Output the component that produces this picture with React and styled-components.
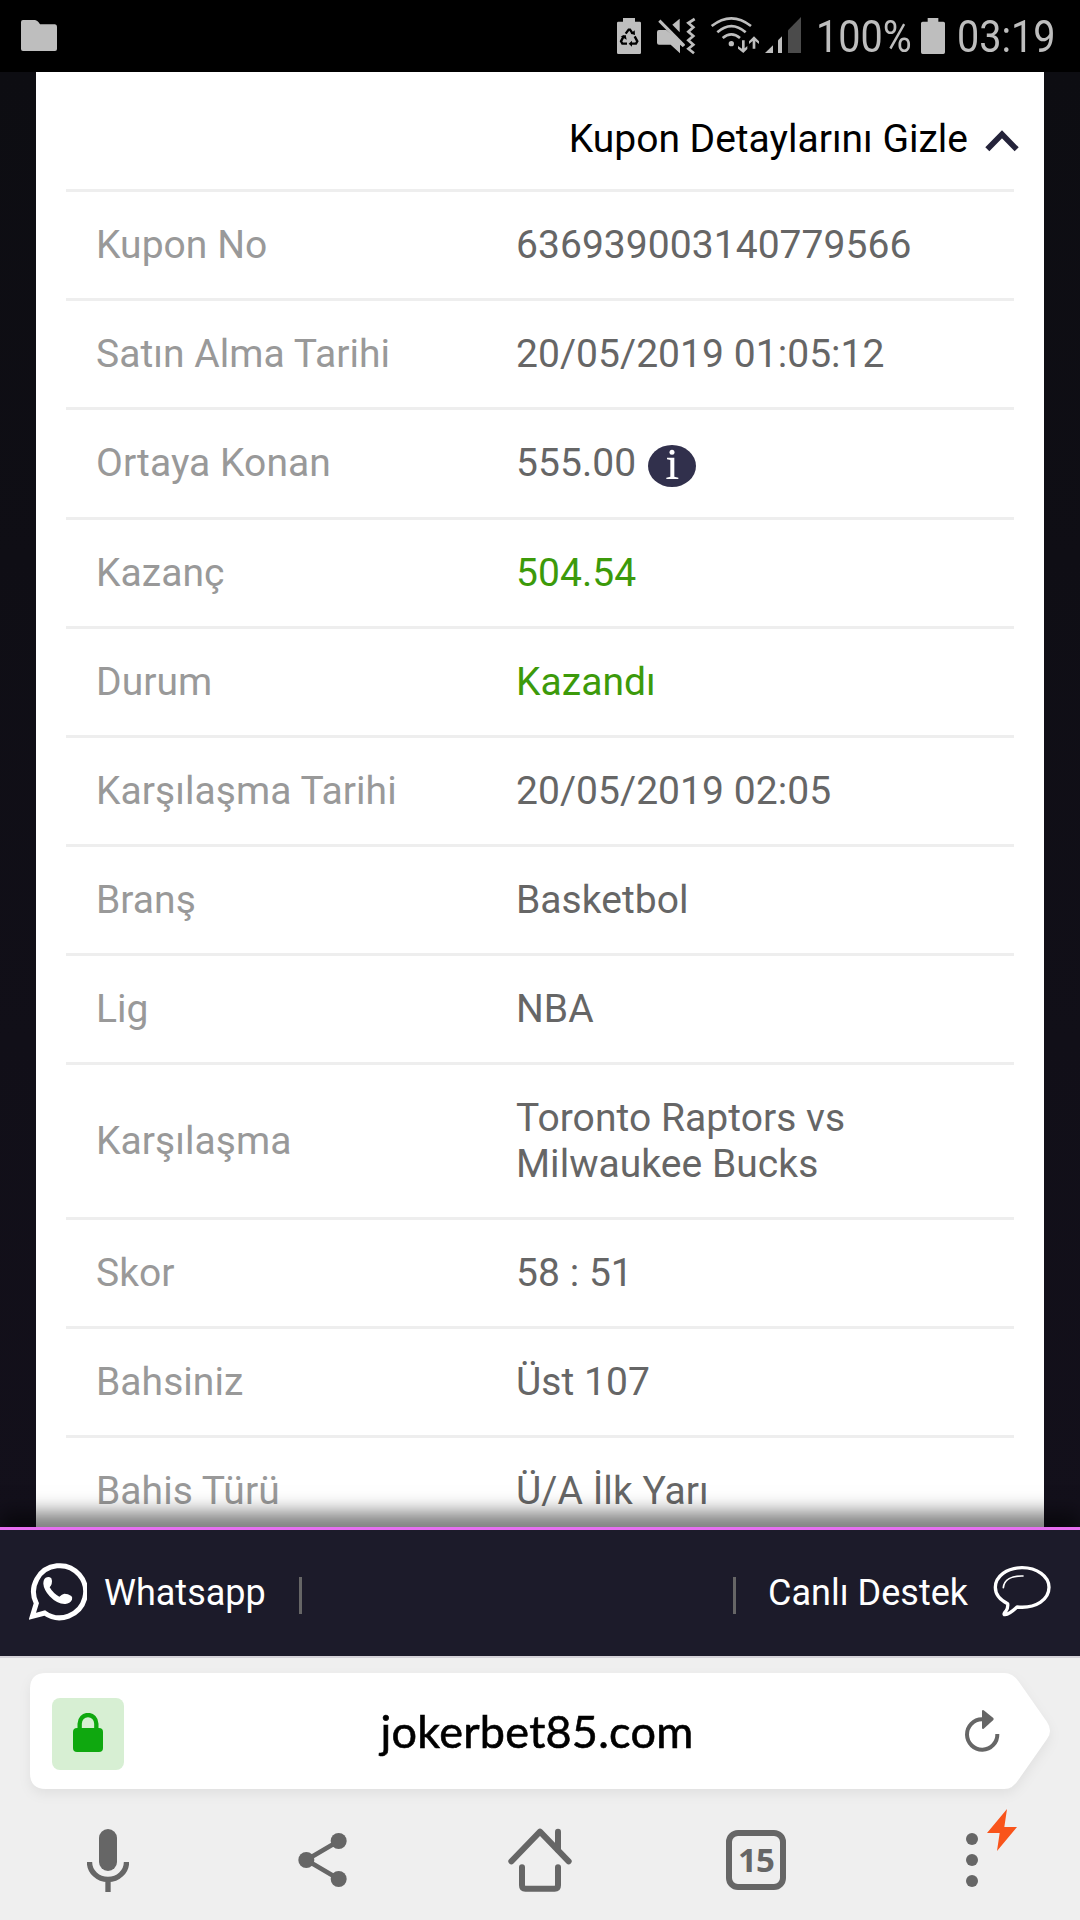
import React from 'react'
import styled, { createGlobalStyle } from 'styled-components';

const rows = [
  { label: 'Kupon No', value: '636939003140779566' },
  { label: 'Satın Alma Tarihi', value: '20/05/2019 01:05:12' },
  { label: 'Ortaya Konan', value: '555.00', info: true },
  { label: 'Kazanç', value: '504.54', won: true },
  { label: 'Durum', value: 'Kazandı', won: true },
  { label: 'Karşılaşma Tarihi', value: '20/05/2019 02:05' },
  { label: 'Branş', value: 'Basketbol' },
  { label: 'Lig', value: 'NBA' },
  { label: 'Karşılaşma', value: 'Toronto Raptors vs Milwaukee Bucks' },
  { label: 'Skor', value: '58 : 51' },
  { label: 'Bahsiniz', value: 'Üst 107' },
  { label: 'Bahis Türü', value: 'Ü/A İlk Yarı' },
];

const FolderIcon = () => (
  <svg width="36" height="31" viewBox="0 0 108 93" fill="#bebebe">
    <path d="M6 0H42Q50 1 57 13H102Q108 14 108 20V87Q108 93 102 93H6Q0 93 0 87V6Q0 0 6 0Z" />
  </svg>
);

// recycle battery, muted speaker, wifi and signal
const StatusIcons = () => (
  <svg width="186" height="40" viewBox="48 48 558 120" fill="#bebebe">
    <path d="M69 54H105V65H119Q123 65 123 69V158Q123 162 119 162H55Q51 162 51 158V69Q51 65 55 65H69Z" />
    <g fill="none" stroke="#000" strokeWidth="7">
      <path d="M77 101L86 89H90L98 101" />
      <path d="M104 109L112 124L108 131H94" />
      <path d="M72 107L63 124L67 131H81" />
    </g>
    <path d="M92 101L105 105L104 91ZM96 122V140L86 131ZM62 109L77 105L80 119Z" fill="#000" />

    <path d="M171 96Q171 90 177 90H199L255 136L248 141L240 134V160L212 134H177Q171 134 171 128Z" />
    <path d="M239 56V97L217 74Z" />
    <path d="M178 62L252 137" stroke="#bebebe" strokeWidth="9" fill="none" />
    <path d="M185 54L260 130" stroke="#000" strokeWidth="5" fill="none" />
    <path d="M284 57L265 69L280 82L265 95L280 108L265 121L280 134L265 146L282 160" stroke="#bebebe" strokeWidth="8" fill="none" />

    <g fill="none" stroke="#bebebe" strokeWidth="8">
      <path d="M335 78Q394 32 453 78" />
      <path d="M352 97Q394 60 437 97" />
      <path d="M368 114Q394 92 420 114" />
    </g>
    <circle cx="394" cy="131" r="8" />
    <path d="M426 121H434V145L442 138V147L430 159L414 146V138L426 146Z" />
    <path d="M458 146V123L447 132V124L462 109L477 124V132L466 123V146Z" />

    <path d="M495 159L519 136V159Z" />
    <path d="M534 159V121L546 109V159Z" />
    <path d="M564 159V91L603 51V159Z" fill="#4b4b4b" />
  </svg>
);

const BatteryIcon = () => (
  <svg width="24" height="36" viewBox="0 0 72 108" fill="#bebebe">
    <path d="M20 0H52V11H67Q72 11 72 16V103Q72 108 67 108H5Q0 108 0 103V16Q0 11 5 11H20Z" />
  </svg>
);

const ChevronUp = () => (
  <svg width="34" height="22" viewBox="1155 389 102 66">
    <path d="M1162 447L1206 402L1250 447" fill="none" stroke="#24233a" strokeWidth="17" />
  </svg>
);

const InfoIcon = () => (
  <svg width="48" height="42" viewBox="504 135 144 126">
    <ellipse cx="576" cy="198" rx="72" ry="63" fill="#31304c" />
    <circle cx="576" cy="157" r="7.5" fill="#fff" />
    <path d="M561 173H583V230L595 233V237H559V233L571 230V180L561 178Z" fill="#fff" />
  </svg>
);

const WhatsappIcon = () => (
  <svg width="58" height="60" viewBox="89 363 174 180">
    <path
      d="M111 490A78 78 0 1 1 136 519L99 529Z"
      fill="none" stroke="#fff" strokeWidth="15"
    />
    <path
      d="M139 413Q149 408 156 415Q160 424 157 432Q155 438 151 442Q162 461 180 470Q188 462 195 461Q206 461 216 468Q220 472 218 479Q212 490 198 492Q174 493 151 469Q133 448 132 431Q132 417 139 413Z"
      fill="#fff"
    />
  </svg>
);

const ChatIcon = () => (
  <svg width="58" height="52" viewBox="877 375 174 156" fill="none" stroke="#fff">
    <path
      d="M964 383C1009 383 1045 409 1045 442C1045 478 1007 507 949 501C939 510 928 522 913 524C907 524 912 518 916 513C922 505 922 499 921 491C898 480 884 463 884 442C884 409 919 383 964 383Z"
      strokeWidth="10" strokeLinejoin="round"
    />
    <path d="M908 443C910 419 933 407 967 408" strokeWidth="5" strokeLinecap="round" />
  </svg>
);

const LockIcon = () => (
  <svg width="30" height="39" viewBox="0 0 90 117">
    <path d="M20 50V32A25 26 0 0 1 70 32V50" fill="none" stroke="#0fa80f" strokeWidth="13" />
    <rect y="45" width="90" height="72" rx="12" fill="#0fa80f" />
  </svg>
);

const ReloadIcon = () => (
  <svg width="36" height="44" viewBox="792 809 108 132">
    <path d="M849 840H846A45.500 45.500 0 1 0 892 884" fill="none" stroke="#666" strokeWidth="12" />
    <path d="M846 815Q847 811 851 813L880 836Q882 839 880 842L851 868Q847 870 846 866Z" fill="#666" />
  </svg>
);

const MicIcon = () => (
  <svg width="42" height="63" viewBox="261 150 126 189">
    <rect x="297" y="150" width="54" height="126" rx="27" fill="#666" />
    <path d="M268.500 249A55.500 52.500 0 0 0 379.500 249M324 302V339" fill="none" stroke="#666" strokeWidth="16" />
  </svg>
);

const ShareIcon = () => (
  <svg width="52" height="54" viewBox="894 159 156 162" fill="#666">
    <path d="M1016 183L919 240L1016 297" fill="none" stroke="#666" strokeWidth="14" />
    <circle cx="1016" cy="183" r="24" />
    <circle cx="919" cy="240" r="24" />
    <circle cx="1016" cy="297" r="24" />
  </svg>
);

const HomeIcon = () => (
  <svg width="64" height="64" viewBox="144 139 192 192" fill="none" stroke="#666" strokeWidth="18" strokeLinecap="round">
    <path d="M154 239L240 150L326 239" strokeLinejoin="round" />
    <path d="M294 150V204" />
    <path d="M186 257V311Q186 321 196 321H284Q294 321 294 311V257" />
  </svg>
);

const MenuIcon = () => (
  <svg width="12" height="54" viewBox="0 0 12 54" fill="#666">
    <circle cx="6" cy="6" r="6" />
    <circle cx="6" cy="27" r="6" />
    <circle cx="6" cy="48" r="6" />
  </svg>
);

const BoltIcon = () => (
  <svg width="30" height="42" viewBox="321 87 90 126">
    <path d="M381 87L321 159H359L351 213L411 141H373Z" fill="#f9541b" />
  </svg>
);

const App = () => {
  return (
    <Screen>
      <GlobalStyle />
      <StatusBar>
        <FolderIcon />
        <StatusRight>
          <StatusIcons />
          <StatusText $width={103}>100%</StatusText>
          <BatteryIcon />
          <StatusText $width={105}>03:19</StatusText>
        </StatusRight>
      </StatusBar>

      <Page>
        <Card>
          <Toggle>
            Kupon Detaylarını Gizle
            <ChevronUp />
          </Toggle>
          <Details>
            {rows.map((row) => (
              <Row key={row.label}>
                <Label>{row.label}</Label>
                <Value $won={row.won}>
                  {row.value}
                  {row.info && <InfoIcon />}
                </Value>
              </Row>
            ))}
          </Details>
        </Card>
      </Page>

      <SupportBar>
        <SupportLink>
          <WhatsappIcon />
          <SupportText>Whatsapp</SupportText>
          <Divider />
        </SupportLink>
        <SupportLink>
          <Divider />
          <SupportText $wide>Canlı Destek</SupportText>
          <ChatIcon />
        </SupportLink>
      </SupportBar>

      <Browser>
        <AddressBar>
          <LockBox>
            <LockIcon />
          </LockBox>
          <Address>jokerbet85.com</Address>
          <ReloadIcon />
        </AddressBar>
        <Nav>
          <NavItem><MicIcon /></NavItem>
          <NavItem><ShareIcon /></NavItem>
          <NavItem><HomeIcon /></NavItem>
          <NavItem><TabCount>15</TabCount></NavItem>
          <NavItem>
            <MenuIcon />
            <Badge><BoltIcon /></Badge>
          </NavItem>
        </Nav>
      </Browser>
    </Screen>
  )
}

export default App;


const GlobalStyle = createGlobalStyle`
  * {
    box-sizing: border-box;
  }

  body {
    margin: 0;
    font-family: Roboto, "Liberation Sans", sans-serif;
  }

  svg {
    display: block;
    flex-shrink: 0;
  }
`;

const Screen = styled.div`
  width: 1080px;
  height: 1920px;
  display: flex;
  flex-direction: column;
  overflow: hidden;
`;

const StatusBar = styled.div`
  display: flex;
  justify-content: space-between;
  height: 72px;
  padding: 0 18px 0 21px;
  background: #000;

  > svg {
    margin-top: 20px;
  }
`;

const StatusRight = styled.div`
  display: flex;
  align-items: flex-start;
  padding-top: 16px;

  > svg + div {
    margin-left: 14px;
  }

  > div + svg {
    margin: 2px -2px 0 2px;
  }
`;

const StatusText = styled.div`
  width: ${(props) => props.$width}px;
  margin-top: -6px;
  color: #bebebe;
  font-size: 45px;
  line-height: 54px;
  white-space: nowrap;
  transform: scaleX(0.88);
  transform-origin: left;

  svg + & {
    margin-left: 14px;
  }
`;

const Page = styled.div`
  height: 1455px;
  padding: 0 36px;
  overflow: hidden;
  background: linear-gradient(#0d0d12, #13101b);
`;

const Card = styled.div`
  height: 1500px;
  padding: 0 30px;
  background: #fff;
`;

const Toggle = styled.div`
  display: flex;
  justify-content: flex-end;
  align-items: center;
  gap: 17px;
  height: 117px;
  margin-right: -5px;
  padding-top: 17px;
  color: #000;
  font-size: 39px;
  line-height: 46px;

  svg {
    margin-top: 3px;
  }
`;

const Details = styled.div`
  display: flex;
  flex-direction: column;
`;

const Row = styled.div`
  display: grid;
  grid-template-columns: 420px 380px;
  align-items: center;
  padding: 30px;
  border-top: 3px solid #eee;
  font-size: 39px;
  letter-spacing: 0.05px;
  line-height: 46px;

  &:nth-child(3) {
    padding-bottom: 31px;
  }
`;

const Label = styled.div`
  color: #999;
`;

const Value = styled.div`
  display: flex;
  align-items: center;
  color: ${(props) => (props.$won ? '#3c9a0a' : '#666')};

  svg {
    margin: 5px 0 -1px 12px;
  }
`;

const SupportBar = styled.div`
  position: relative;
  z-index: 1;
  display: flex;
  justify-content: space-between;
  height: 129px;
  padding: 0 29px;
  border-top: 3px solid #e66ff0;
  background: #1c1b2a;
  box-shadow: 0 -15px 18px rgba(0, 0, 0, 0.5);
`;

const SupportLink = styled.div`
  display: flex;
  align-items: center;

  svg {
    margin-bottom: 4px;
  }
`;

const SupportText = styled.div`
  margin: 0 ${(props) => (props.$wide ? 25 : 18)}px 0 17px;
  color: #fff;
  font-size: 36px;
  line-height: 42px;
`;

const Divider = styled.div`
  width: 3px;
  height: 37px;
  margin: 5px 15px 0;
  background: #666;
`;

const Browser = styled.div`
  position: relative;
  z-index: 2;
  height: 264px;
  padding-top: 15px;
  border-top: 2px solid #d5d3d9;
  background: #efefef;
`;

// clipped white plate behind the address, pointed on the right
const AddressBar = styled.div`
  position: relative;
  display: flex;
  align-items: center;
  height: 116px;
  margin: 0 30px;
  padding: 0 50px 0 22px;
  filter: drop-shadow(0 5px 6px rgba(0, 0, 0, 0.06));

  &::before {
    content: '';
    position: absolute;
    inset: 0;
    z-index: -1;
    background: #fff;
    clip-path: path('M16 0H974Q983 0 989 9L1017 49Q1023 58 1017 66L989 106Q983 116 974 116H16Q0 116 0 100V16Q0 0 16 0Z');
  }
`;

const LockBox = styled.div`
  display: flex;
  justify-content: center;
  align-items: center;
  width: 72px;
  height: 72px;
  margin-top: 5px;
  padding-bottom: 2px;
  border-radius: 8px;
  background: #d7efd3;
`;

const Address = styled.div`
  flex: 1;
  padding-right: 14px;
  color: #000;
  font-family: Lato, sans-serif;
  font-size: 45px;
  letter-spacing: 0.25px;
  line-height: 54px;
  text-align: center;
  -webkit-text-stroke: 0.6px #000;
`;

const Nav = styled.div`
  display: grid;
  grid-template-columns: repeat(5, 1fr);
  height: 131px;
  padding-top: 11px;
`;

const NavItem = styled.div`
  position: relative;
  display: flex;
  justify-content: center;
  align-items: center;
`;

const TabCount = styled.div`
  width: 60px;
  height: 60px;
  border: 6px solid #666;
  border-radius: 12px;
  color: #666;
  font-family: "Noto Sans", sans-serif;
  font-size: 33px;
  font-weight: 700;
  letter-spacing: -1px;
  line-height: 48px;
  text-align: center;
`;

const Badge = styled.div`
  position: absolute;
  left: 123px;
  top: 9px;
`;
